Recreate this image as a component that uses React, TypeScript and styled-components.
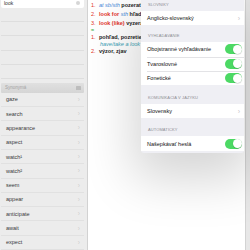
import React from "react";
import styled, { createGlobalStyle } from "styled-components";

const Global = createGlobalStyle`
  html, body { margin: 0; padding: 0; width: 250px; height: 250px; overflow: hidden; background: #fff; }
  body { font-family: "Liberation Sans", Arial, sans-serif; -webkit-font-smoothing: antialiased; }
  * { box-sizing: border-box; }
`;

const Screen = styled.div`
  width: 250px;
  height: 250px;
  display: flex;
  overflow: hidden;
`;

const Sidebar = styled.div`
  width: 88px;
  flex: none;
  background: #ececec;
  border-right: 1px solid #d2d2d2;
  padding: 0 3px 0 1px;
  display: flex;
  flex-direction: column;
`;

const SearchField = styled.div`
  height: 8px;
  background: #fff;
  border-radius: 0 0 2px 2px;
  display: flex;
  align-items: center;
  justify-content: space-between;
  padding: 0 4px 1px 3px;
  font-size: 5px;
  color: #333;
`;

const Clear = styled.span`
  width: 4px;
  height: 4px;
  border-radius: 50%;
  background: #d6d6d6;
`;

const EmptyRow = styled.div`
  height: 14.3px;
  flex: none;
  border-bottom: 1px solid #dedede;
`;

const SynHeader = styled.div`
  height: 10px;
  margin-top: 3.5px;
  flex: none;
  background: linear-gradient(#e0e0e0, #d5d5d5);
  border-radius: 1px;
  display: flex;
  align-items: center;
  justify-content: space-between;
  padding: 0 3px 0 4px;
  font-size: 4.5px;
  color: #a3a3a3;
`;

const HeaderIcon = styled.span`
  width: 5px;
  height: 4px;
  border-radius: 0.5px;
  background: #bdbdbd;
`;

const SynRow = styled.div`
  height: 14.3px;
  flex: none;
  display: flex;
  align-items: center;
  justify-content: space-between;
  padding: 0 4px 0 5px;
  border-bottom: 1px solid #e1e1e1;
  font-size: 5.5px;
  color: #3a3a3a;
`;

const SideChevron = styled.span`
  font-size: 6.5px;
  color: #cfcfcf;
`;

const Main = styled.div`
  flex: 1;
  position: relative;
  background: #fff;
`;

const Entry = styled.div`
  padding: 0.5px 0 0 3px;
  font-size: 5.5px;
  white-space: nowrap;
  color: #222;
`;

const Line = styled.div<{ $lh: number }>`
  display: flex;
  line-height: ${(p) => p.$lh}px;
`;

const Num = styled.span<{ $green?: boolean }>`
  width: 8px;
  flex: none;
  color: ${(p) => (p.$green ? "#3fae49" : "#e2322a")};
  font-weight: ${(p) => (p.$green ? 700 : 400)};
`;

const Body = styled.span`
  display: flex;
  gap: 1.5px;
`;

const Bold = styled.b`
  font-weight: 700;
  color: #1d1d1d;
`;

const RedWord = styled.b`
  font-weight: 700;
  color: #e2322a;
`;

const BlueWord = styled.i`
  color: #3f86d6;
`;

const TealWord = styled.i`
  color: #3aa0b4;
  padding-left: 1px;
`;

const Popover = styled.div`
  position: absolute;
  left: 53px;
  top: 0;
  width: 103px;
  height: 153px;
  background: #efeff4;
  border-radius: 0 0 3px 3px;
  box-shadow: 0 18px 50px 8px rgba(0, 0, 0, 0.17);
  display: flex;
  flex-direction: column;
`;

const SectionHeader = styled.div<{ $h: number }>`
  height: ${(p) => p.$h}px;
  flex: none;
  display: flex;
  align-items: flex-end;
  padding: 0 0 4.5px 7px;
  font-size: 4px;
  line-height: 4px;
  color: #8e8e93;
  letter-spacing: 0.1px;
`;

const Group = styled.div`
  background: #fff;
  display: flex;
  flex-direction: column;
`;

const Row = styled.div`
  height: 14.3px;
  flex: none;
  position: relative;
  display: flex;
  align-items: center;
  justify-content: space-between;
  padding: 0 2px 0 6px;
  font-size: 5.5px;
  color: #111;

  & + &::before {
    content: "";
    position: absolute;
    left: 6px;
    right: 0;
    top: 0;
    height: 1px;
    background: #e3e3e6;
  }
`;

const Chevron = styled.span`
  font-size: 7px;
  color: #c7c7cc;
  margin-right: 2px;
`;

const Toggle = styled.span`
  width: 17px;
  height: 10px;
  border-radius: 5px;
  background: #4cd964;
  position: relative;

  &::after {
    content: "";
    position: absolute;
    right: 0.5px;
    top: 0.5px;
    width: 9px;
    height: 9px;
    border-radius: 50%;
    background: #fff;
    box-shadow: 0 0.5px 1px rgba(0, 0, 0, 0.25);
  }
`;

const Edge = styled.div`
  width: 5px;
  flex: none;
  background: #e7e7e7;
  border-left: 1px solid #d3d3d3;
`;

const synonyms = [
  "gaze",
  "search",
  "appearance",
  "aspect",
  "watch\u00b9",
  "watch\u00b2",
  "seem",
  "appear",
  "anticipate",
  "await",
  "expect",
];

export default function App() {
  return (
    <>
      <Global />
      <Screen>
        <Sidebar>
          <SearchField>
            <span>look</span>
            <Clear />
          </SearchField>
          {[0, 1, 2, 3, 4].map((i) => (
            <EmptyRow key={i} />
          ))}
          <SynHeader>
            <span>Synonymá</span>
            <HeaderIcon />
          </SynHeader>
          {synonyms.map((s) => (
            <SynRow key={s}>
              <span>{s}</span>
              <SideChevron>›</SideChevron>
            </SynRow>
          ))}
        </Sidebar>
        <Main>
          <Entry>
            <Line $lh={9}>
              <Num>1.</Num>
              <Body>
                <BlueWord>at sb/sth</BlueWord>
                <Bold>pozerať sa</Bold>
              </Body>
            </Line>
            <Line $lh={9}>
              <Num>2.</Num>
              <Body>
                <RedWord>look for</RedWord>
                <BlueWord>sth</BlueWord>
                <Bold>hľadať</Bold>
              </Body>
            </Line>
            <Line $lh={9}>
              <Num>3.</Num>
              <Body>
                <RedWord>look (like)</RedWord>
                <Bold>vyzerať</Bold>
              </Body>
            </Line>
            <Line $lh={5.5}>
              <Num $green>≈</Num>
            </Line>
            <Line $lh={8}>
              <Num>1.</Num>
              <Body>
                <Bold>pohľad, pozretie (</Bold>
              </Body>
            </Line>
            <Line $lh={6}>
              <Num />
              <Body>
                <TealWord>have/take a look at</TealWord>
              </Body>
            </Line>
            <Line $lh={9}>
              <Num>2.</Num>
              <Body>
                <Bold>výzor, zjav</Bold>
              </Body>
            </Line>
          </Entry>
          <Popover>
            <SectionHeader $h={11}>SLOVNÍKY</SectionHeader>
            <Group>
              <Row>
                <span>Anglicko-slovenský</span>
                <Chevron>›</Chevron>
              </Row>
            </Group>
            <SectionHeader $h={17}>VYHĽADÁVANIE</SectionHeader>
            <Group>
              <Row>
                <span>Obojstranné vyhľadávanie</span>
                <Toggle />
              </Row>
              <Row>
                <span>Tvaroslovné</span>
                <Toggle />
              </Row>
              <Row>
                <span>Fonetické</span>
                <Toggle />
              </Row>
            </Group>
            <SectionHeader $h={19}>KOMUNIKÁCIA V JAZYKU</SectionHeader>
            <Group>
              <Row>
                <span>Slovensky</span>
                <Chevron>›</Chevron>
              </Row>
            </Group>
            <SectionHeader $h={18}>AUTOMATICKY</SectionHeader>
            <Group>
              <Row>
                <span>Našepkávať heslá</span>
                <Toggle />
              </Row>
            </Group>
          </Popover>
        </Main>
        <Edge />
      </Screen>
    </>
  );
}
